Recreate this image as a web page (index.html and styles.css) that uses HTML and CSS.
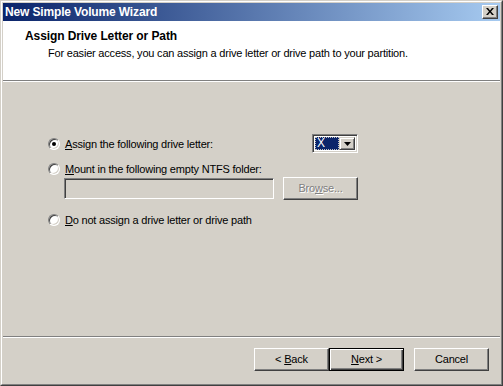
FILE: index.html
```html
<!DOCTYPE html>
<html lang="en">
<head>
    <meta charset="UTF-8">
    <title>New Simple Volume Wizard</title>
    <link rel="stylesheet" href="styles.css">
</head>
<body>
    <div class="window">
        <div class="frame">
            <div class="titlebar">
                <span class="title">New Simple Volume Wizard</span>
                <div class="close-btn">
                    <svg width="8" height="7" viewBox="0 0 8 7">
                        <path d="M0 0h2l2 2.5L6 0h2L5 3.5 8 7H6L4 4.5 2 7H0l3-3.5z" fill="#000"/>
                    </svg>
                </div>
            </div>

            <div class="header">
                <div class="header-title">Assign Drive Letter or Path</div>
                <div class="header-sub">For easier access, you can assign a drive letter or drive path to your partition.</div>
            </div>
            <div class="sep"></div>

            <div class="content">
                <div class="options">
                    <div class="row row-first">
                        <span class="radio checked"></span>
                        <span class="label"><u>A</u>ssign the following drive letter:</span>
                        <div class="combo">
                            <div class="combo-value"><span class="focus">X</span></div>
                            <div class="combo-arrow">
                                <svg width="7" height="4" viewBox="0 0 7 4"><path d="M0 0h7L3.5 4z" fill="#000"/></svg>
                            </div>
                        </div>
                    </div>
                    <div class="row row-mount">
                        <span class="radio"></span>
                        <span class="label"><u>M</u>ount in the following empty NTFS folder:</span>
                    </div>
                    <div class="folder-row">
                        <div class="field"></div>
                        <div class="btn disabled"><span>Bro<u>w</u>se...</span></div>
                    </div>
                    <div class="row row-none">
                        <span class="radio"></span>
                        <span class="label"><u>D</u>o not assign a drive letter or drive path</span>
                    </div>
                </div>
            </div>

            <div class="sep"></div>
            <div class="footer">
                <div class="btn"><span>&lt; <u>B</u>ack</span></div>
                <div class="btn default"><span><u>N</u>ext &gt;</span></div>
                <div class="btn cancel"><span>Cancel</span></div>
            </div>
        </div>
    </div>
</body>
</html>
```

FILE: styles.css
```css
body {
    margin: 0;
    font-family: "Liberation Sans", Arial, sans-serif;
    font-size: 11px;
    letter-spacing: -0.2px;
    color: #000;
    background: #d4d0c8;
}
.window {
    width: 503px;
    height: 386px;
    box-sizing: border-box;
    border: 1px solid;
    border-color: #d4d0c8 #404040 #404040 #d4d0c8;
    background: #d4d0c8;
}
.frame {
    height: 100%;
    box-sizing: border-box;
    border: 1px solid;
    border-color: #fff #808080 #808080 #fff;
    padding: 1px;
    display: flex;
    flex-direction: column;
}
.titlebar {
    height: 18px;
    flex-shrink: 0;
    display: flex;
    align-items: center;
    justify-content: space-between;
    padding: 0 2px 0 2px;
    background: linear-gradient(to right, #0a246a, #a6caf0);
}
.title {
    color: #fff;
    font-weight: bold;
    font-size: 12px;
    letter-spacing: -0.15px;
}
.close-btn {
    width: 16px;
    height: 14px;
    box-sizing: border-box;
    background: #d4d0c8;
    border: 1px solid;
    border-color: #fff #404040 #404040 #fff;
    box-shadow: inset -1px -1px #808080;
    display: flex;
    align-items: center;
    justify-content: center;
}
.close-btn svg {
    margin: 0 1px 1px 0;
}
.header {
    height: 59px;
    flex-shrink: 0;
    background: #fff;
    box-sizing: border-box;
    padding: 8px 0 0 22px;
}
.header-title {
    font-weight: bold;
    font-size: 12px;
    line-height: 14px;
    letter-spacing: -0.1px;
}
.header-sub {
    margin: 3px 0 0 23px;
    line-height: 14px;
}
.sep {
    height: 1px;
    flex-shrink: 0;
    border-top: 1px solid #808080;
    background: #fff;
}
.content {
    flex: 1;
}
.options {
    width: 310px;
    margin: 52px 0 0 45px;
}
.row {
    display: flex;
    align-items: center;
}
.row-first {
    height: 19px;
}
.row-mount {
    height: 14px;
    margin-top: 9px;
}
.row-none {
    height: 14px;
    margin-top: 14px;
}
.radio {
    width: 12px;
    height: 12px;
    box-sizing: border-box;
    border-radius: 50%;
    border: 1px solid;
    border-color: #808080 #fff #fff #808080;
    box-shadow: inset 1px 1px #404040, inset -1px -1px #d4d0c8;
    background: #fff;
    position: relative;
    flex-shrink: 0;
}
.radio.checked::after {
    content: "";
    position: absolute;
    left: 3px;
    top: 3px;
    width: 4px;
    height: 4px;
    border-radius: 50%;
    background: #000;
}
.label {
    margin-left: 5px;
}
.combo {
    margin-left: auto;
    width: 46px;
    height: 19px;
    box-sizing: border-box;
    border: 1px solid;
    border-color: #808080 #fff #fff #808080;
    box-shadow: inset 1px 1px #404040, inset -1px -1px #d4d0c8;
    padding: 2px;
    display: flex;
    background: #fff;
}
.combo-value {
    flex: 1;
    display: flex;
}
.combo-value .focus {
    flex: 1;
    background: #0a246a;
    color: #fff;
    outline: 1px dotted #c0c0c0;
    outline-offset: -1px;
    padding-left: 2px;
    line-height: 13px;
    font-size: 12px;
}
.combo-arrow {
    width: 16px;
    box-sizing: border-box;
    background: #d4d0c8;
    border: 1px solid;
    border-color: #d4d0c8 #404040 #404040 #d4d0c8;
    box-shadow: inset 1px 1px #fff, inset -1px -1px #808080;
    display: flex;
    align-items: center;
    justify-content: center;
}
.folder-row {
    display: flex;
    justify-content: space-between;
    margin: 1px 0 0 16px;
    height: 22px;
}
.field {
    width: 210px;
    height: 21px;
    margin-top: 1px;
    box-sizing: border-box;
    border: 1px solid;
    border-color: #808080 #fff #fff #808080;
    box-shadow: inset 1px 1px #404040, inset -1px -1px #d4d0c8;
    background: #d4d0c8;
}
.btn {
    width: 75px;
    height: 23px;
    box-sizing: border-box;
    background: #d4d0c8;
    border: 1px solid;
    border-color: #fff #404040 #404040 #fff;
    box-shadow: inset -1px -1px #808080;
    display: flex;
    align-items: center;
    justify-content: center;
    padding-bottom: 1px;
}
.btn.disabled {
    color: #808080;
    text-shadow: 1px 1px #fff;
}
.btn.default {
    border: 1px solid #000;
    box-shadow: inset 1px 1px #fff, inset -1px -1px #404040, inset -2px -2px #808080;
}
.footer {
    height: 45px;
    flex-shrink: 0;
    box-sizing: border-box;
    display: flex;
    justify-content: flex-end;
    padding: 10px 11px 0 0;
}
.btn.cancel {
    margin-left: 10px;
}
```
